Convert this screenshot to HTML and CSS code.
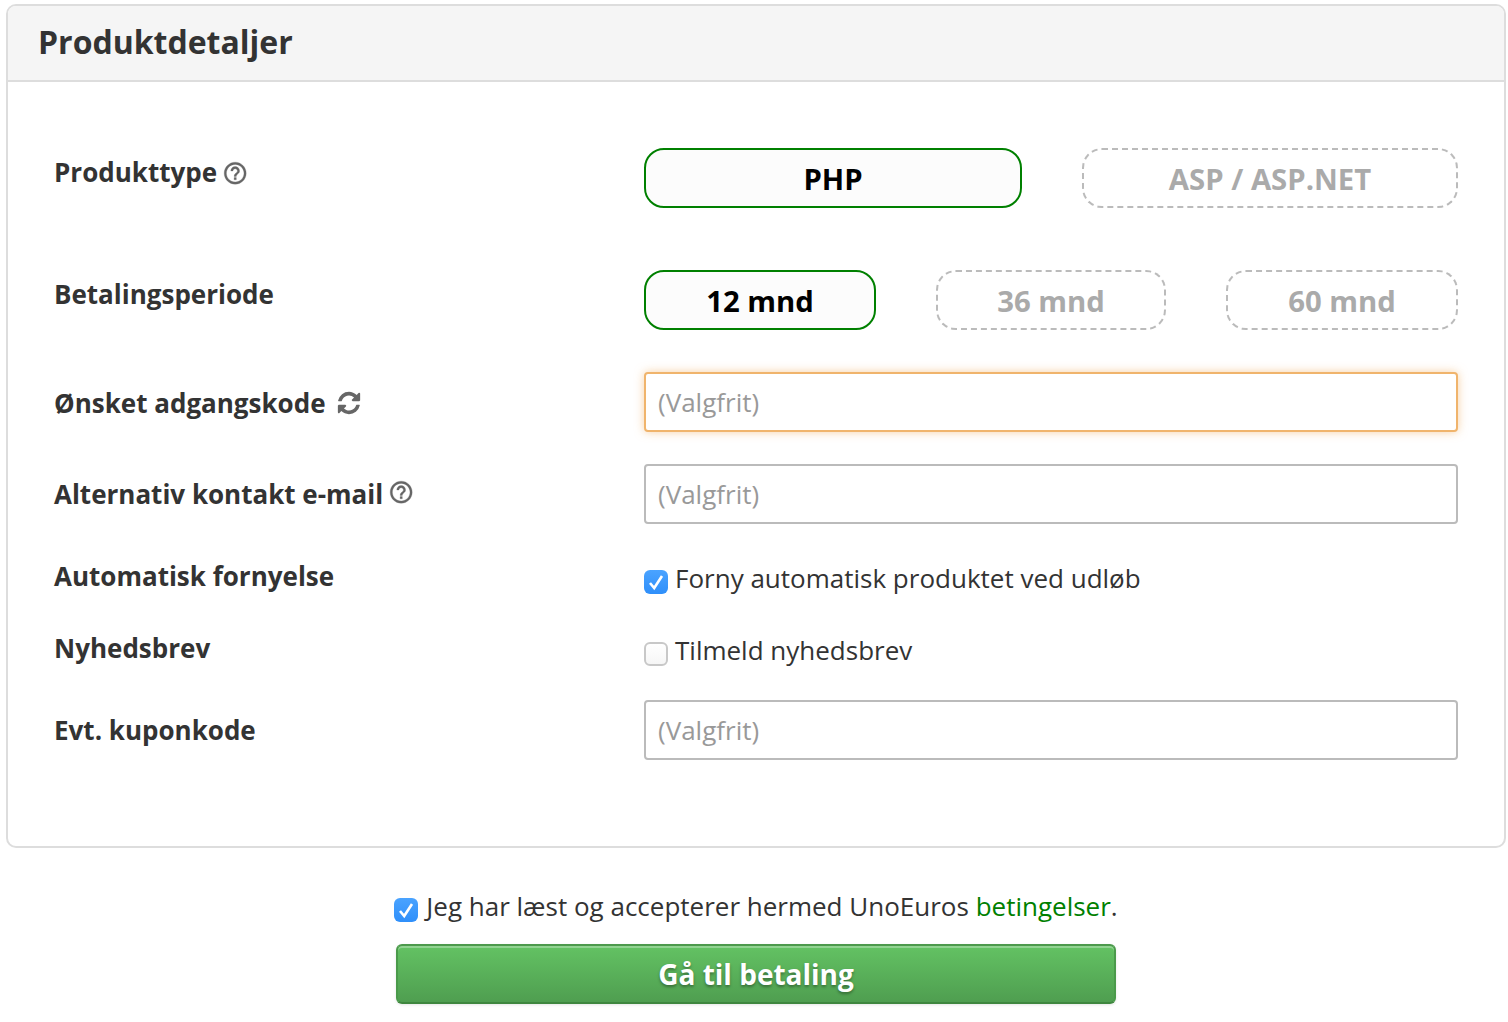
FILE: index.html
```html
<!DOCTYPE html>
<html lang="da">
<head>
<meta charset="utf-8">
<title>Produktdetaljer</title>
<link rel="stylesheet" href="styles.css">
</head>
<body>
<section class="panel">
  <h2 class="panel-title">Produktdetaljer</h2>
  <div class="panel-body">
    <div class="row row-type">
      <div class="label">Produkttype <svg class="help" viewBox="0 0 24 24"><path d="M11 18h2v-2h-2v2zm1-16C6.48 2 2 6.48 2 12s4.48 10 10 10 10-4.48 10-10S17.52 2 12 2zm0 18c-4.41 0-8-3.59-8-8s3.59-8 8-8 8 3.59 8 8-3.59 8-8 8zm0-14c-2.21 0-4 1.79-4 4h2c0-1.1.9-2 2-2s2 .9 2 2c0 2-3 1.75-3 5h2c0-2.25 3-2.5 3-5 0-2.21-1.79-4-4-4z"/></svg></div>
      <div class="options options-two">
        <div class="option selected">PHP</div>
        <div class="option">ASP / ASP.NET</div>
      </div>
    </div>
    <div class="row row-period">
      <div class="label">Betalingsperiode</div>
      <div class="options options-three">
        <div class="option selected">12 mnd</div>
        <div class="option">36 mnd</div>
        <div class="option">60 mnd</div>
      </div>
    </div>
    <div class="row row-input">
      <div class="label label-input label-password">Ønsket adgangskode <svg class="refresh" viewBox="0 0 1792 1792"><path d="M1639 1056q0 5-1 7-64 268-268 434.5t-478 166.5q-146 0-282.5-55t-243.5-157l-129 129q-19 19-45 19t-45-19-19-45v-448q0-26 19-45t45-19h448q26 0 45 19t19 45-19 45l-137 137q71 66 161 102t187 36q134 0 250-65t186-179q11-17 53-117 8-23 30-23h192q13 0 22.5 9.5t9.5 22.5zm25-800v448q0 26-19 45t-45 19h-448q-26 0-45-19t-19-45 19-45l138-138q-148-137-349-137-134 0-250 65t-186 179q-11 17-53 117-8 23-30 23h-199q-13 0-22.5-9.5t-9.5-22.5v-7q65-268 270-434.5t480-166.5q146 0 284 55.5t245 156.5l130-129q19-19 45-19t45 19 19 45z"/></svg></div>
      <input class="text-input focused" type="text" placeholder="(Valgfrit)">
    </div>
    <div class="row row-email">
      <div class="label label-input">Alternativ kontakt e-mail <svg class="help" viewBox="0 0 24 24"><path d="M11 18h2v-2h-2v2zm1-16C6.48 2 2 6.48 2 12s4.48 10 10 10 10-4.48 10-10S17.52 2 12 2zm0 18c-4.41 0-8-3.59-8-8s3.59-8 8-8 8 3.59 8 8-3.59 8-8 8zm0-14c-2.21 0-4 1.79-4 4h2c0-1.1.9-2 2-2s2 .9 2 2c0 2-3 1.75-3 5h2c0-2.25 3-2.5 3-5 0-2.21-1.79-4-4-4z"/></svg></div>
      <input class="text-input" type="text" placeholder="(Valgfrit)">
    </div>
    <div class="row row-renew">
      <div class="label">Automatisk fornyelse</div>
      <div class="check-line">
        <span class="check checked"><svg viewBox="0 0 24 24"><path d="M6 13l4.2 5L18 6"/></svg></span>
        <span>Forny automatisk produktet ved udløb</span>
      </div>
    </div>
    <div class="row row-news">
      <div class="label">Nyhedsbrev</div>
      <div class="check-line">
        <span class="check"></span>
        <span>Tilmeld nyhedsbrev</span>
      </div>
    </div>
    <div class="row">
      <div class="label label-input">Evt. kuponkode</div>
      <input class="text-input" type="text" placeholder="(Valgfrit)">
    </div>
  </div>
</section>
<div class="checkout">
  <div class="check-line terms">
    <span class="check checked"><svg viewBox="0 0 24 24"><path d="M6 13l4.2 5L18 6"/></svg></span>
    <span>Jeg har læst og accepterer hermed UnoEuros <a class="link" href="#">betingelser</a>.</span>
  </div>
  <button class="pay" type="button">Gå til betaling</button>
</div>
</body>
</html>
```
FILE: styles.css
```css
* { box-sizing: border-box; }
html, body { margin: 0; padding: 0; background: #fff; }
body {
  font-family: "Open Sans", "Noto Sans", sans-serif;
  font-size: 26px;
  color: #333;
  padding: 4px 2px 0 6px;
  height: 1022px;
  overflow: hidden;
}
.panel {
  border: 2px solid #ddd;
  border-radius: 10px;
  height: 844px;
  overflow: hidden;
}
.panel-title {
  margin: 0;
  height: 76px;
  padding: 0 30px;
  background: #f5f5f5;
  border-bottom: 2px solid #ddd;
  font-size: 32px;
  font-weight: 700;
  line-height: 72px;
  color: #333;
}
.panel-body { padding: 66px 46px 0; }
.row {
  display: grid;
  grid-template-columns: 590px 814px;
}
.row-type { height: 122px; }
.row-period { height: 102px; }
.row-input { height: 92px; }
.row-email { height: 88px; }
.row-renew { height: 72px; }
.row-news { height: 76px; }
.label {
  font-weight: 700;
  font-size: 26px;
  line-height: 34px;
  color: #333;
  display: flex;
  align-items: center;
  height: 34px;
  margin-top: 7px;
  white-space: pre;
}
.label-input { margin-top: 13px; }
.label-password { margin-top: 14px; }
.help {
  width: 26.4px;
  height: 26.4px;
  fill: #666;
  stroke: #666;
  stroke-width: 0.25;
  margin: -4px 0 0 -2px;
}
.row-type .help { margin-top: 3px; }
.refresh { width: 26px; height: 26px; fill: #666; margin-left: 4px; }
.options { display: grid; column-gap: 60px; }
.options-two { grid-template-columns: 378px 376px; }
.options-three { grid-template-columns: 232px 230px 232px; }
.option {
  height: 60px;
  border: 2px dashed #bbb;
  border-radius: 20px;
  background: #fff;
  color: #aaa;
  font-size: 29.3px;
  font-weight: 700;
  line-height: 58px;
  text-align: center;
}
.option.selected {
  border: 2px solid #008000;
  background: #fcfcfc;
  color: #000;
}
.text-input {
  width: 814px;
  height: 60px;
  padding: 0 12px;
  border: 2px solid #bbb;
  border-radius: 4px;
  background: #fff;
  font-family: inherit;
  font-size: 26px;
  color: #333;
  outline: none;
}
.text-input::placeholder { color: #999; opacity: 1; }
.text-input.focused {
  border-color: #f0b46c;
  box-shadow: 0 0 10px rgba(240, 170, 90, 0.55);
}
.check-line {
  display: flex;
  align-items: flex-start;
  gap: 7px;
  margin-top: 8px;
  font-size: 26px;
  line-height: 36px;
  color: #333;
}
.check {
  flex: none;
  width: 24px;
  height: 24px;
  margin-top: 10px;
  border: 2px solid #c8c8c8;
  border-radius: 6px;
  background: linear-gradient(#fff, #f6f6f6);
}
.check.checked {
  border: 0;
  background: linear-gradient(#4aa3ff, #2f8ffa);
}
.check svg { display: block; width: 24px; height: 24px; fill: none; stroke: #fff; stroke-width: 2.6; }
.checkout {
  margin-top: 40px;
  display: flex;
  flex-direction: column;
  align-items: center;
}
.terms { height: 36px; margin-top: 0; gap: 8px; }
.link { color: #008000; text-decoration: none; }
.pay {
  margin-top: 20px;
  width: 720px;
  height: 60px;
  border: 2px solid #4a9a4a;
  border-top: 2px solid #4c994c;
  border-bottom: 2px solid #3f873f;
  border-radius: 6px;
  background: linear-gradient(#63c263, #4f9e50);
  box-shadow: inset 0 2px 0 rgba(255, 255, 255, 0.3), 0 1px 3px rgba(0, 0, 0, 0.1);
  color: #fff;
  font-family: inherit;
  font-size: 28px;
  font-weight: 700;
  text-shadow: 0 2px 3px rgba(0, 0, 0, 0.35);
  padding: 0;
}
```
